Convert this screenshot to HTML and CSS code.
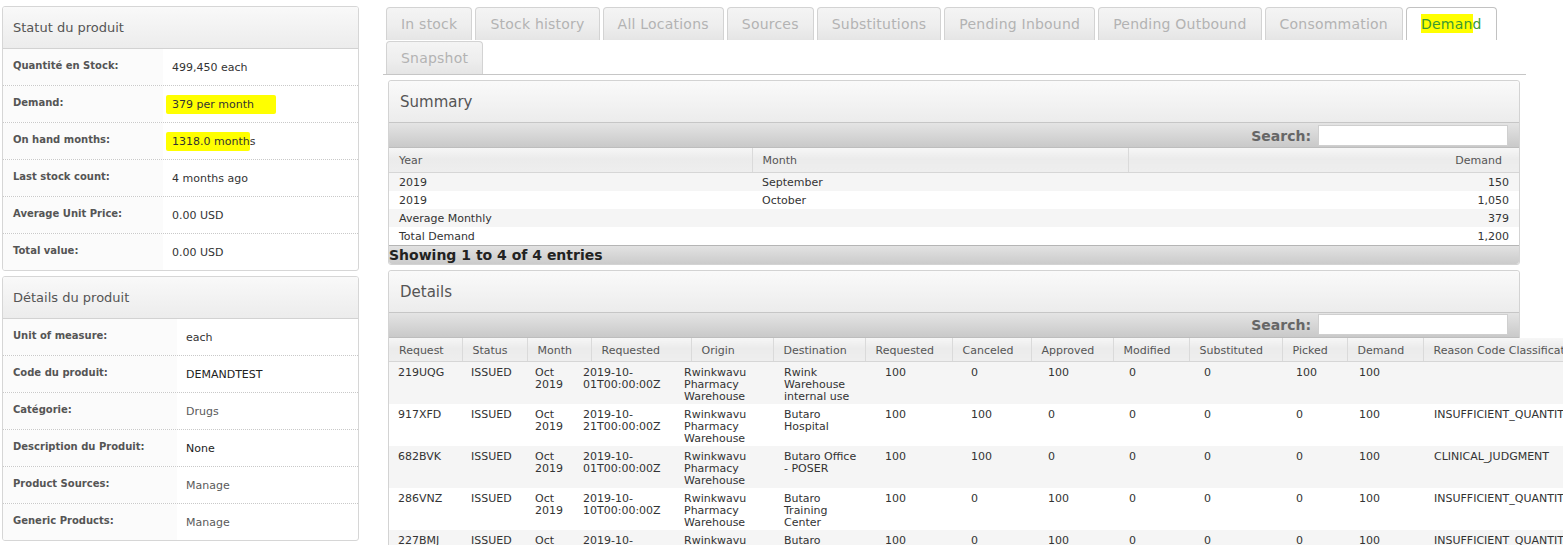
FILE: index.html
```html
<!DOCTYPE html>
<html lang="fr">
<head>
<meta charset="utf-8">
<title>Product — Demand</title>
<link rel="stylesheet" href="styles.css">
</head>
<body>
<div class="page">
  <aside class="side">
    <section class="box">
      <h2 class="box-title">Statut du produit</h2>
      <div class="props props-status">
        <div class="prop"><div class="prop-k">Quantité en Stock:</div><div class="prop-v">499,450 each</div></div>
        <div class="prop"><div class="prop-k">Demand:</div><div class="prop-v"><span class="hl hl-demand">379 per month</span></div></div>
        <div class="prop"><div class="prop-k">On hand months:</div><div class="prop-v"><span class="hl hl-months">1318.0 month</span>s</div></div>
        <div class="prop"><div class="prop-k">Last stock count:</div><div class="prop-v">4 months ago</div></div>
        <div class="prop"><div class="prop-k">Average Unit Price:</div><div class="prop-v">0.00 USD</div></div>
        <div class="prop"><div class="prop-k">Total value:</div><div class="prop-v">0.00 USD</div></div>
      </div>
    </section>
    <section class="box">
      <h2 class="box-title">Détails du produit</h2>
      <div class="props props-details">
        <div class="prop"><div class="prop-k">Unit of measure:</div><div class="prop-v">each</div></div>
        <div class="prop"><div class="prop-k">Code du produit:</div><div class="prop-v dark">DEMANDTEST</div></div>
        <div class="prop"><div class="prop-k">Catégorie:</div><div class="prop-v link">Drugs</div></div>
        <div class="prop"><div class="prop-k">Description du Produit:</div><div class="prop-v dark">None</div></div>
        <div class="prop"><div class="prop-k">Product Sources:</div><div class="prop-v link">Manage</div></div>
        <div class="prop"><div class="prop-k">Generic Products:</div><div class="prop-v link">Manage</div></div>
      </div>
    </section>
  </aside>

  <main class="main">
    <ul class="tabs">
      <li class="tab">In stock</li>
      <li class="tab">Stock history</li>
      <li class="tab">All Locations</li>
      <li class="tab">Sources</li>
      <li class="tab">Substitutions</li>
      <li class="tab">Pending Inbound</li>
      <li class="tab">Pending Outbound</li>
      <li class="tab">Consommation</li>
      <li class="tab tab-active"><span class="hl-tab">Deman</span>d</li>
      <li class="tab">Snapshot</li>
    </ul>

    <section class="panel">
      <div class="panel-title">Summary</div>
      <div class="toolbar"><label class="search-label">Search:</label><input class="search-input" type="text"></div>
      <table class="grid summary-grid">
        <colgroup><col class="c-year"><col class="c-month"><col></colgroup>
        <thead>
          <tr><th>Year</th><th>Month</th><th class="num">Demand</th></tr>
        </thead>
        <tbody>
          <tr><td>2019</td><td>September</td><td class="num">150</td></tr>
          <tr><td>2019</td><td>October</td><td class="num">1,050</td></tr>
          <tr><td>Average Monthly</td><td></td><td class="num">379</td></tr>
          <tr><td>Total Demand</td><td></td><td class="num">1,200</td></tr>
        </tbody>
      </table>
      <div class="info">Showing 1 to 4 of 4 entries</div>
    </section>

    <section class="panel panel-details">
      <div class="panel-title">Details</div>
      <div class="toolbar"><label class="search-label">Search:</label><input class="search-input" type="text"></div>
      <table class="grid details-head">
        <colgroup>
          <col class="h1"><col class="h2"><col class="h3"><col class="h4"><col class="h5"><col class="h6"><col class="h7"><col class="h8"><col class="h9"><col class="h10"><col class="h11"><col class="h12"><col class="h13"><col class="h14">
        </colgroup>
        <thead>
          <tr><th>Request</th><th>Status</th><th>Month</th><th>Requested</th><th>Origin</th><th>Destination</th><th>Requested</th><th>Canceled</th><th>Approved</th><th>Modified</th><th>Substituted</th><th>Picked</th><th>Demand</th><th>Reason Code Classification</th></tr>
        </thead>
      </table>
      <table class="grid details-body">
        <colgroup>
          <col class="b1"><col class="b2"><col class="b3"><col class="b4"><col class="b5"><col class="b6"><col class="b7"><col class="b8"><col class="b9"><col class="b10"><col class="b11"><col class="b12"><col class="b13"><col class="b14">
        </colgroup>
        <tbody>
          <tr><td>219UQG</td><td>ISSUED</td><td>Oct 2019</td><td>2019-10-<wbr>01T00:00:00Z</td><td>Rwinkwavu Pharmacy Warehouse</td><td class="dest">Rwink Warehouse internal use</td><td>100</td><td>0</td><td>100</td><td>0</td><td>0</td><td>100</td><td>100</td><td></td></tr>
          <tr><td>917XFD</td><td>ISSUED</td><td>Oct 2019</td><td>2019-10-<wbr>21T00:00:00Z</td><td>Rwinkwavu Pharmacy Warehouse</td><td class="dest">Butaro Hospital</td><td>100</td><td>100</td><td>0</td><td>0</td><td>0</td><td>0</td><td>100</td><td>INSUFFICIENT_QUANTITY_AVAILABLE</td></tr>
          <tr><td>682BVK</td><td>ISSUED</td><td>Oct 2019</td><td>2019-10-<wbr>01T00:00:00Z</td><td>Rwinkwavu Pharmacy Warehouse</td><td class="dest">Butaro Office - POSER</td><td>100</td><td>100</td><td>0</td><td>0</td><td>0</td><td>0</td><td>100</td><td>CLINICAL_JUDGMENT</td></tr>
          <tr><td>286VNZ</td><td>ISSUED</td><td>Oct 2019</td><td>2019-10-<wbr>10T00:00:00Z</td><td>Rwinkwavu Pharmacy Warehouse</td><td class="dest">Butaro Training Center</td><td>100</td><td>0</td><td>100</td><td>0</td><td>0</td><td>0</td><td>100</td><td>INSUFFICIENT_QUANTITY_AVAILABLE</td></tr>
          <tr><td>227BMJ</td><td>ISSUED</td><td>Oct 2019</td><td>2019-10-<wbr>10T00:00:00Z</td><td>Rwinkwavu Pharmacy Warehouse</td><td class="dest">Butaro Hospital</td><td>100</td><td>0</td><td>100</td><td>0</td><td>0</td><td>0</td><td>100</td><td>INSUFFICIENT_QUANTITY_AVAILABLE</td></tr>
        </tbody>
      </table>
    </section>
  </main>
</div>
</body>
</html>
```

FILE: styles.css
```css
html {
  overflow: hidden;
}

body {
  margin: 0;
  background: #fff;
  color: #333;
  font-family: "DejaVu Sans", Verdana, sans-serif;
  font-size: 11px;
}

.page {
  display: flex;
  align-items: flex-start;
  gap: 24px;
  padding: 6px 0 0 2px;
}

/* ---------- left column ---------- */
.side {
  flex: none;
  width: 357px;
  display: flex;
  flex-direction: column;
  gap: 5px;
}

.box {
  border: 1px solid #d6d6d6;
  border-radius: 3px;
  background: #fff;
  overflow: hidden;
}

.box-title {
  margin: 0;
  height: 40px;
  line-height: 40px;
  padding: 1px 0 0 10px;
  font-size: 13px;
  font-weight: normal;
  color: #555;
  background: linear-gradient(#f9f9f9, #ececec);
  border-bottom: 1px solid #d2d2d2;
}

.prop {
  display: grid;
  grid-template-columns: 160px 1fr;
  height: 37px;
  box-sizing: border-box;
  border-bottom: 1px dotted #c9c9c9;
}

.prop:last-child {
  border-bottom: 0;
  height: 36px;
}

.props-details .prop {
  grid-template-columns: 174px 1fr;
}

.prop-k {
  background: #fbfbfb;
  padding: 11px 0 0 10px;
  font-size: 10px;
  line-height: 12px;
  font-weight: bold;
  color: #555;
}

.prop-v {
  padding: 12px 0 0 9px;
  line-height: 14px;
  font-size: 11px;
  color: #333;
}

.prop-v.dark {
  color: #222;
}

.prop-v.link {
  color: #5a5a5a;
}

.hl {
  background: #ffff00;
  padding: 3px 0 3px 6px;
  margin-left: -6px;
  border-radius: 2px;
}

.hl-demand {
  padding-right: 22px;
}

/* ---------- right column ---------- */
.main {
  flex: none;
  width: 1143px;
}

.tabs {
  list-style: none;
  margin: 0;
  padding: 1px 0 0 3px;
  display: flex;
  flex-wrap: wrap;
  row-gap: 1px;
  border-bottom: 1px solid #c6c6c6;
}

.tab {
  margin-right: 3px;
  padding: 8px 14px 7px;
  font-size: 14px;
  line-height: 17px;
  letter-spacing: 0.22px;
  color: #b3b3b3;
  border: 1px solid #d3d3d3;
  border-bottom: 0;
  border-radius: 4px 4px 0 0;
  background: linear-gradient(#f4f4f4, #eeeeee 55%, #e5e5e5);
}

.tab-active {
  background: #fff;
  border-color: #c2c2c2;
  color: #3b9a33;
}

.hl-tab {
  background: #ffff00;
  padding: 2px 0 1px;
}

.panel {
  margin: 5px 6px 0 5px;
  border: 1px solid #d3d3d3;
  border-radius: 3px;
  background: #fff;
}

.panel-title {
  height: 39px;
  line-height: 39px;
  padding: 2px 0 0 11px;
  font-size: 15px;
  color: #555;
  background: linear-gradient(#fafafa, #ececec);
  border-bottom: 1px solid #c6c6c6;
  border-radius: 3px 3px 0 0;
}

.toolbar {
  height: 24px;
  display: flex;
  justify-content: flex-end;
  align-items: center;
  gap: 7px;
  padding-right: 11px;
  background: linear-gradient(#e4e4e4, #c9c9c9);
  border-bottom: 1px solid #bdbdbd;
}

.search-label {
  font-size: 14px;
  font-weight: bold;
  color: #666;
  padding-top: 1px;
}

.search-input {
  box-sizing: border-box;
  width: 190px;
  height: 21px;
  margin: 0;
  padding: 0;
  border: 1px solid #cfcfcf;
  background: #fff;
}

.grid {
  border-collapse: collapse;
  table-layout: fixed;
}

.grid th {
  height: 24px;
  padding: 2px 0 0 10px;
  box-sizing: border-box;
  text-align: left;
  font-weight: normal;
  font-size: 11px;
  color: #555;
  background: linear-gradient(#f6f6f6, #ebebeb 45%, #eeeeee);
  border-right: 1px solid #dadada;
  border-bottom: 1px solid #d6d6d6;
  white-space: nowrap;
  overflow: hidden;
}

.grid th:last-child {
  border-right: 0;
}

.summary-grid {
  width: 100%;
}

.summary-grid .c-year { width: 363px; }
.summary-grid .c-month { width: 376px; }

.summary-grid td {
  padding: 1px 10px 0 10px;
  height: 17px;
  line-height: 17px;
  color: #333;
}

.summary-grid tbody tr:nth-child(odd) td,
.details-body tbody tr:nth-child(odd) td {
  background: #f5f5f5;
}

.summary-grid th.num {
  text-align: right;
  padding-right: 17px;
}

.summary-grid td.num {
  text-align: right;
}

.info {
  height: 18px;
  line-height: 19px;
  padding-left: 0;
  font-size: 14px;
  font-weight: bold;
  color: #222;
  background: linear-gradient(#e2e2e2, #cbcbcb);
  border-top: 1px solid #b5b5b5;
  border-radius: 0 0 3px 3px;
}

.panel-details {
  position: relative;
}

.details-head,
.details-body {
  width: 1234px;
}

.details-head .h1 { width: 73px; }
.details-head .h2 { width: 65px; }
.details-head .h3 { width: 64px; }
.details-head .h4 { width: 100px; }
.details-head .h5 { width: 82px; }
.details-head .h6 { width: 92px; }
.details-head .h7 { width: 87px; }
.details-head .h8 { width: 79px; }
.details-head .h9 { width: 82px; }
.details-head .h10 { width: 76px; }
.details-head .h11 { width: 93px; }
.details-head .h12 { width: 65px; }
.details-head .h13 { width: 76px; }
.details-head .h14 { width: 200px; }

.details-head th {
  padding-left: 10px;
}

.details-body .b1 { width: 73px; }
.details-body .b2 { width: 64px; }
.details-body .b3 { width: 48px; }
.details-body .b4 { width: 101px; }
.details-body .b5 { width: 100px; }
.details-body .b6 { width: 101px; }
.details-body .b7 { width: 86px; }
.details-body .b8 { width: 77px; }
.details-body .b9 { width: 81px; }
.details-body .b10 { width: 75px; }
.details-body .b11 { width: 92px; }
.details-body .b12 { width: 63px; }
.details-body .b13 { width: 75px; }
.details-body .b14 { width: 198px; }

.details-body tr {
  height: 42px;
}

.details-body td {
  padding: 5px 5px 1px 9px;
  vertical-align: top;
  line-height: 12px;
  font-size: 11px;
  color: #333;
  background: #fff;
}

.details-body td.dest {
  padding-right: 15px;
}
```
